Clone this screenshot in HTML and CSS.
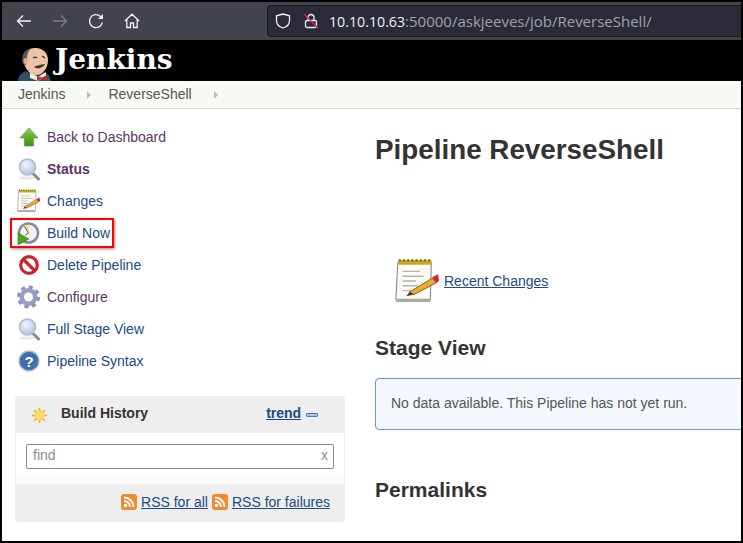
FILE: index.html
```html
<!DOCTYPE html>
<html lang="en">
<head>
    <meta charset="UTF-8">
    <meta name="viewport" content="width=device-width, initial-scale=1.0">
    <title>ReverseShell [Jenkins]</title>
    <link rel="stylesheet" href="styles.css">
</head>
<body>
<div class="frame">
    <div class="toolbar">
        <svg class="nav-icon" viewBox="0 0 16 16"><path d="M15 8H1.500M7 2.500 1.500 8 7 13.500" fill="none" stroke="#f2f2f4" stroke-width="1.300"/></svg>
        <svg class="nav-icon" viewBox="0 0 16 16"><path d="M1 8h13.500M9 2.500 14.500 8 9 13.500" fill="none" stroke="#7c7d83" stroke-width="1.300"/></svg>
        <svg class="nav-icon" viewBox="0 0 16 16"><path d="M14.300 9.500A6.500 6.500 0 1 1 12.300 3.200L14 5" fill="none" stroke="#f2f2f4" stroke-width="1.300"/><path d="M15 1v5h-5z" fill="#f2f2f4"/></svg>
        <svg class="nav-icon" viewBox="0 0 16 16"><path d="M.8 8 8 1.200 15.200 8M2.800 6.500V14.500H6.500V10H9.500V14.500H13.200V6.500" fill="none" stroke="#f2f2f4" stroke-width="1.300"/></svg>
        <div class="urlbar">
            <svg class="url-icon" viewBox="0 0 16 16"><path d="M8 1 1.500 2.800V8c0 3.500 3.500 6 6.500 7 3-1 6.500-3.500 6.500-7V2.800z" fill="none" stroke="#f2f2f4" stroke-width="1.300"/></svg>
            <svg class="url-icon lock" viewBox="0 0 16 16"><rect x="2.500" y="7.500" width="11" height="7" rx="1.500" fill="none" stroke="#f2f2f4" stroke-width="1.300"/><path d="M5 7.500V4.500a3 3 0 0 1 6 0V7.500" fill="none" stroke="#f2f2f4" stroke-width="1.300"/><path d="M1.500 1.500 15 15" stroke="#e22850" stroke-width="1.300"/></svg>
            <span class="url-text"><span class="url-host">10.10.10.63</span>:50000/askjeeves/job/ReverseShell/</span>
        </div>
    </div>

    <div class="header">
        <svg class="mascot" viewBox="0 0 36 38">
            <path d="M1 38c0-5 3-8 8-10l6 3 12-2c4 1 6 4 7 9z" fill="#2f4d63"/>
            <path d="M13 29l8 5 8-5v4l-8 5-8-3z" fill="#f1eee4"/>
            <path d="M6 17C5 9 12 4.500 19 5c7 .5 12 5 12 12 0 8-5 15-12 15-6 0-11-6-13-15z" fill="#ecc4a8"/>
            <path d="M6 21C3 13 8 6 14 5.500 11 8 10 12 10 16l-1 6z" fill="#5d5755"/>
            <ellipse cx="8.500" cy="18" rx="2" ry="3" fill="#dca98c"/>
            <path d="M16 15c1.500-1 3-1 4 0M25 13l3 2" fill="none" stroke="#3a2a22" stroke-width="1.200"/>
            <path d="M17 24c3-2 6-2 11-3-1 3-7 6-11 3z" fill="#463733"/>
            <path d="M20 33l5 1.500 5-2.500v5l-5-1.500-5 2.500z" fill="#d8232a"/>
        </svg>
        <span class="brand">Jenkins</span>
    </div>

    <div class="breadcrumbs">
        <span class="crumb">Jenkins</span>
        <span class="crumb-arrow"></span>
        <span class="crumb">ReverseShell</span>
        <span class="crumb-arrow"></span>
    </div>

    <div class="main">
        <div class="side">
            <div class="tasks">
                <a class="task visited">
                    <svg class="task-icon" viewBox="0 0 24 24">
                        <defs><linearGradient id="up" x1="0" y1="0" x2="0" y2="1"><stop offset="0" stop-color="#8fd04a"/><stop offset="1" stop-color="#3f8a16"/></linearGradient></defs>
                        <path d="M13 3 22 13H17.500V21H8.500V13H4z" fill="url(#up)" stroke="#4f9a22" stroke-width=".6"/>
                    </svg>
                    Back to Dashboard
                </a>
                <a class="task visited current">
                    <svg class="task-icon" viewBox="0 0 24 24"><use href="#lens"/></svg>
                    Status
                </a>
                <a class="task">
                    <svg class="task-icon" viewBox="0 0 24 24"><use href="#notepad"/></svg>
                    Changes
                </a>
                <a class="task marked">
                    <svg class="task-icon" viewBox="0 0 24 24">
                        <circle cx="12.500" cy="12" r="10.800" fill="#8a86a0"/>
                        <circle cx="12.500" cy="12" r="8.300" fill="#f3f2ef"/>
                        <path d="M12.500 12 8 5A8.300 8.300 0 0 1 12.500 3.700z" fill="#f0d890"/>
                        <path d="M12.500 12 8.500 5.500M12.500 12l-3 2" stroke="#555" stroke-width="1" fill="none"/>
                        <path d="M2 12 13 18 2 24z" fill="#46a81e" stroke="#2f7d10" stroke-width=".6"/>
                    </svg>
                    Build Now
                </a>
                <a class="task">
                    <svg class="task-icon" viewBox="0 0 24 24">
                        <circle cx="13" cy="12" r="8.300" fill="#fff" stroke="#c8262a" stroke-width="3.200"/>
                        <path d="M7 6 19 18" stroke="#c8262a" stroke-width="3.200"/>
                    </svg>
                    Delete Pipeline
                </a>
                <a class="task visited">
                    <svg class="task-icon" viewBox="0 0 24 24">
                        <circle cx="12.500" cy="12" r="6.800" fill="none" stroke="#9a9ec4" stroke-width="4.600"/>
                        <circle cx="12.500" cy="12" r="10" fill="none" stroke="#8a8fb8" stroke-width="3" stroke-dasharray="4 3.850"/>
                        <circle cx="12.500" cy="12" r="3.500" fill="#fff"/>
                    </svg>
                    Configure
                </a>
                <a class="task">
                    <svg class="task-icon" viewBox="0 0 24 24"><use href="#lens"/></svg>
                    Full Stage View
                </a>
                <a class="task">
                    <svg class="task-icon" viewBox="0 0 24 24">
                        <circle cx="13" cy="12" r="10" fill="#3f6fa8" stroke="#a9c0da" stroke-width="1.400"/>
                        <text class="help-mark" x="13" y="17.500" text-anchor="middle">?</text>
                    </svg>
                    Pipeline Syntax
                </a>
            </div>

            <div class="history">
                <div class="history-head">
                    <svg class="sun" viewBox="0 0 16 16">
                        <path d="M8 0v16M0 8h16M2.300 2.300 13.700 13.700M13.700 2.300 2.300 13.700" stroke="#f2a93b" stroke-width="1.600"/>
                        <circle cx="8" cy="8" r="5" fill="#fbe25a" stroke="#f5c44a" stroke-width=".8"/>
                    </svg>
                    <span class="history-title">Build History</span>
                    <a class="trend">trend</a>
                    <span class="trend-dash"></span>
                </div>
                <div class="history-body">
                    <div class="find"><span>find</span><span class="find-x">x</span></div>
                </div>
                <div class="history-foot">
                    <svg class="rss" viewBox="0 0 16 16"><use href="#feed"/></svg>
                    <a>RSS for all</a>
                    <svg class="rss" viewBox="0 0 16 16"><use href="#feed"/></svg>
                    <a>RSS for failures</a>
                </div>
            </div>
        </div>

        <div class="content">
            <h1>Pipeline ReverseShell</h1>
            <div class="recent">
                <svg class="recent-icon" viewBox="0 0 24 24"><use href="#notepad"/></svg>
                <a>Recent Changes</a>
            </div>
            <h2 class="stage-title">Stage View</h2>
            <div class="notice">No data available. This Pipeline has not yet run.</div>
            <h2 class="links-title">Permalinks</h2>
        </div>
    </div>
</div>

<svg class="defs" width="0" height="0">
    <defs>
        <radialGradient id="glass" cx=".4" cy=".35" r=".8"><stop offset="0" stop-color="#f0f6fc"/><stop offset="1" stop-color="#9cbde0"/></radialGradient>
        <symbol id="lens" viewBox="0 0 24 24">
            <ellipse cx="11" cy="21" rx="8" ry="1.600" fill="#e8e8e8"/>
            <path d="M16.500 16 22.500 22" stroke="#8a8a8a" stroke-width="3" stroke-linecap="round"/>
            <circle cx="11.500" cy="10" r="8" fill="url(#glass)" stroke="#b4bcc6" stroke-width="1.600"/>
        </symbol>
        <symbol id="notepad" viewBox="0 0 24 24">
            <path d="M2.500 2.500H20L19.500 21.500H1.500z" fill="#fbfaf4" stroke="#8f8f8a" stroke-width=".6"/>
            <path d="M1.500 21.500H19.500V23H1.500z" fill="#a8a8a4"/>
            <path d="M2.800 1H20V3.500H2.800z" fill="#c8a82a"/>
            <path d="M3 1.200H20" stroke="#7a6510" stroke-width="1.200" stroke-dasharray="1 1.200"/>
            <path d="M5 7h9M5 9.500h11M5 12h7M5 14.500h8M5 17h10" stroke="#b4b4b0" stroke-width=".7"/>
            <path d="M8.500 17.800 20.500 10.500 22.500 13 11 19z" fill="#e8a83a" stroke="#8f5f14" stroke-width=".5"/>
            <path d="M20.500 10 23.500 8.500 24 12 22.500 13z" fill="#d8232a"/>
            <path d="M8.500 17.800 7 20l4-1z" fill="#4a3a26"/>
        </symbol>
        <symbol id="feed" viewBox="0 0 16 16">
            <rect width="16" height="16" rx="3" fill="#f08a2c"/>
            <circle cx="4.500" cy="11.500" r="1.800" fill="#fff"/>
            <path d="M3 7a6 6 0 0 1 6 6M3 3.500A9.500 9.500 0 0 1 12.500 13" fill="none" stroke="#fff" stroke-width="2"/>
        </symbol>
    </defs>
</svg>
</body>
</html>
```
FILE: styles.css
```css
* {
    box-sizing: border-box;
}

html, body {
    margin: 0;
    height: 100%;
    overflow: hidden;
}

body {
    font-family: "Liberation Sans", Arial, sans-serif;
    font-size: 14px;
    background-color: #fff;
    color: #333;
}

a {
    color: #204a87;
}

.defs {
    position: absolute;
}

.frame {
    height: 543px;
    border: 2px solid #000;
    overflow: hidden;
    display: flex;
    flex-direction: column;
}

/* browser chrome */
.toolbar {
    flex: none;
    height: 38px;
    background-color: #42444c;
    display: flex;
    align-items: center;
    padding-left: 14px;
    font-family: "Open Sans", sans-serif;
}

.nav-icon {
    width: 16px;
    height: 16px;
    margin-right: 20px;
    flex: none;
}

.urlbar {
    margin-left: 107px;
    flex: 1;
    height: 32px;
    background-color: #2a2b36;
    border: 1px solid #1b1c24;
    border-right: none;
    border-radius: 4px 0 0 4px;
    display: flex;
    align-items: center;
    padding-left: 7px;
}

.url-icon {
    width: 16px;
    height: 16px;
    flex: none;
}

.url-icon.lock {
    margin-left: 12px;
}

.url-text {
    margin-left: 10px;
    font-size: 15px;
    color: #a0a1a8;
    white-space: nowrap;
}

.url-host {
    font-size: 14.2px;
    color: #f2f2f4;
}

/* jenkins header */
.header {
    flex: none;
    height: 41px;
    background-color: #000;
    display: flex;
    padding-left: 15px;
}

.mascot {
    width: 36px;
    height: 38px;
    margin-top: 3px;
    flex: none;
}

.brand {
    margin-left: 2px;
    font-family: "DejaVu Serif", serif;
    font-weight: bold;
    font-size: 28px;
    line-height: 40px;
    color: #fff;
}

.breadcrumbs {
    flex: none;
    height: 28px;
    background-color: #f6faf2;
    border-bottom: 1px solid #d3d7cf;
    display: flex;
    align-items: center;
    padding: 0 0 2px 16px;
    color: #555;
}

.crumb-arrow {
    width: 0;
    height: 0;
    margin: 2px 17px 0 22px;
    border-left: 4px solid #babdb6;
    border-top: 4px solid transparent;
    border-bottom: 4px solid transparent;
}

.main {
    flex: 1;
    display: flex;
    min-height: 0;
}

/* side panel */
.side {
    flex: none;
    width: 343px;
    padding: 12px 0 0 13px;
}

.tasks {
    padding-left: 1px;
}

.task {
    display: flex;
    align-items: center;
    height: 32px;
    gap: 7px;
    position: relative;
}

.task.visited {
    color: #5c3566;
}

.task.current {
    font-weight: bold;
}

.task-icon {
    width: 24px;
    height: 24px;
    flex: none;
}

/* red annotation round the Build Now row */
.task.marked::after {
    content: "";
    position: absolute;
    left: -6px;
    top: 1px;
    box-sizing: border-box;
    width: 104px;
    height: 30px;
    border: 2px solid #f00;
    box-shadow: 1px 1px 3px rgba(0, 0, 0, .45);
}

.help-mark {
    font-family: "Liberation Sans", sans-serif;
    font-weight: bold;
    font-size: 15px;
    fill: #fff;
}

.history {
    width: 330px;
    margin-top: 19px;
    border-radius: 4px;
    background-color: #eee;
}

.history-head {
    height: 37px;
    display: flex;
    align-items: center;
    padding: 0 0 3px 17px;
    font-weight: bold;
}

.sun {
    width: 15px;
    height: 15px;
    margin-top: 4px;
    flex: none;
}

.history-title {
    margin-left: 14px;
}

.trend {
    margin-left: 118px;
    text-decoration: underline;
}

.trend-dash {
    width: 12px;
    height: 4px;
    margin: 3px 0 0 5px;
    background-color: #a9c4e0;
    border: 1px solid #4f7cb0;
    border-radius: 1px;
}

.history-body {
    height: 51px;
    margin: 0 1px;
    padding: 11px 10px 0;
    background: linear-gradient(#fff 44px, #f9f9f9 44px);
}

.find {
    height: 25px;
    border: 1px solid #8b8b93;
    border-radius: 2px;
    display: flex;
    justify-content: space-between;
    align-items: center;
    padding: 0 5px 3px 6px;
    color: #8d8d8d;
}

.history-foot {
    height: 38px;
    display: flex;
    justify-content: flex-end;
    align-items: center;
    padding: 0 15px 2px 0;
}

.history-foot a {
    text-decoration: underline;
    margin-left: 4px;
    margin-right: 4px;
}

.history-foot a:last-child {
    margin-right: 0;
}

.rss {
    width: 16px;
    height: 16px;
    flex: none;
}

/* main column */
.content {
    flex: 1;
    min-width: 0;
    padding-left: 30px;
}

h1 {
    margin: 25px 0 0;
    font-size: 27.8px;
    line-height: 32px;
}

h2 {
    margin: 0;
    font-size: 21px;
    line-height: 24px;
}

.recent {
    display: flex;
    align-items: center;
    margin: 92px 0 0 18px;
    gap: 5px;
}

.recent a {
    text-decoration: underline;
}

.recent-icon {
    width: 46px;
    height: 46px;
    flex: none;
}

.stage-title {
    margin-top: 32px;
}

.notice {
    width: 400px;
    height: 52px;
    margin-top: 18px;
    padding-left: 15px;
    line-height: 48px;
    background-color: #f2f8fd;
    border: 1px solid #6d97c8;
    border-radius: 4px;
    color: #555;
}

.links-title {
    margin-top: 48px;
}
```
